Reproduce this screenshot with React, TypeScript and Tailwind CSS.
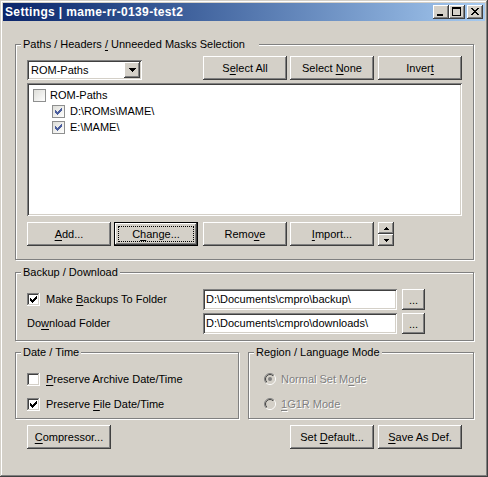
import React from "react";

const raised =
  "bg-[#d4d0c8] shadow-[inset_-1px_-1px_#404040,inset_1px_1px_#ffffff,inset_-2px_-2px_#808080,inset_2px_2px_#d4d0c8]";
const sunken =
  "shadow-[inset_1px_1px_#808080,inset_-1px_-1px_#ffffff,inset_2px_2px_#404040,inset_-2px_-2px_#d4d0c8]";

function Mn({ t, u }: { t: string; u?: number }) {
  if (u === undefined) return <>{t}</>;
  return (
    <>
      {t.slice(0, u)}
      <span className="underline decoration-1 underline-offset-[2px]">{t[u]}</span>
      {t.slice(u + 1)}
    </>
  );
}

// classic 7x7 tick, drawn as pixel columns
const tick = [2, 1, 0, 1, 2, 3, 4];
function Tick({ color, x = 3, y = 3 }: { color: string; x?: number; y?: number }) {
  return (
    <>
      {[2, 3, 4, 3, 2, 1, 0].map((s, c) => (
        <rect key={c} x={x + c} y={y + s} width={1} height={3} fill={color} />
      ))}
    </>
  );
}

function Btn({
  label,
  u,
  className = "",
}: {
  label: string;
  u?: number;
  className?: string;
}) {
  return (
    <div className={`w-[84px] h-[24px] shrink-0 flex items-center justify-center ${raised} ${className}`}>
      <span className="mt-[1px]">
        <Mn t={label} u={u} />
      </span>
    </div>
  );
}

function DefaultBtn({ label, u, className = "" }: { label: string; u?: number; className?: string }) {
  return (
    <div
      className={`w-[84px] h-[24px] shrink-0 p-[4px] bg-[#d4d0c8] shadow-[inset_0_0_0_1px_#000000,inset_-2px_-2px_#404040,inset_2px_2px_#ffffff,inset_-3px_-3px_#808080,inset_3px_3px_#d4d0c8] ${className}`}
    >
      <div className="w-full h-full border border-dotted border-black flex items-center justify-center">
        <span className="mt-[1px]">
          <Mn t={label} u={u} />
        </span>
      </div>
    </div>
  );
}

function Group({
  title,
  u,
  padR = "pr-[2px]",
  className = "",
  children,
}: {
  title: string;
  u?: number;
  padR?: string;
  className?: string;
  children: React.ReactNode;
}) {
  return (
    <div className={`border border-[#808080] shadow-[inset_1px_1px_#ffffff,1px_1px_#ffffff] ${className}`}>
      <div className={`-mt-[7px] ml-[5px] w-fit pl-[2px] ${padR} bg-[#d4d0c8] h-[13px] leading-[13px]`}>
        <Mn t={title} u={u} />
      </div>
      {children}
    </div>
  );
}

function Check({ checked }: { checked: boolean }) {
  return (
    <svg width="13" height="13" viewBox="0 0 13 13" shapeRendering="crispEdges" className="shrink-0">
      <rect x="0" y="0" width="12" height="1" fill="#808080" />
      <rect x="0" y="0" width="1" height="12" fill="#808080" />
      <rect x="1" y="1" width="10" height="1" fill="#404040" />
      <rect x="1" y="1" width="1" height="10" fill="#404040" />
      <rect x="0" y="12" width="13" height="1" fill="#ffffff" />
      <rect x="12" y="0" width="1" height="13" fill="#ffffff" />
      <rect x="1" y="11" width="11" height="1" fill="#d4d0c8" />
      <rect x="11" y="1" width="1" height="11" fill="#d4d0c8" />
      <rect x="2" y="2" width="9" height="9" fill="#ffffff" />
      {checked && <Tick color="#000000" />}
    </svg>
  );
}

function TreeCheck({ checked, id }: { checked: boolean; id: string }) {
  return (
    <svg width="13" height="13" viewBox="0 0 13 13" shapeRendering="crispEdges" className="shrink-0">
      <defs>
        <linearGradient id={id} x1="0" y1="0" x2="1" y2="1">
          <stop offset="0" stopColor="#dcdcd7" />
          <stop offset="1" stopColor="#ffffff" />
        </linearGradient>
      </defs>
      <rect x="0.5" y="0.5" width="12" height="12" fill={`url(#${id})`} stroke="#8e8f8f" />
      {checked && <Tick color="#4b5e9e" />}
    </svg>
  );
}

function Radio({ checked, id }: { checked: boolean; id: string }) {
  return (
    <svg width="12" height="12" viewBox="0 0 12 12" className="shrink-0">
      <defs>
        <linearGradient id={`${id}a`} x1="0" y1="0" x2="1" y2="1">
          <stop offset="0.5" stopColor="#808080" />
          <stop offset="0.5" stopColor="#ffffff" />
        </linearGradient>
        <linearGradient id={`${id}b`} x1="0" y1="0" x2="1" y2="1">
          <stop offset="0.5" stopColor="#404040" />
          <stop offset="0.5" stopColor="#d4d0c8" />
        </linearGradient>
      </defs>
      <circle cx="6" cy="6" r="5.5" fill="none" stroke={`url(#${id}a)`} />
      <circle cx="6" cy="6" r="4.5" fill="#d4d0c8" stroke={`url(#${id}b)`} />
      {checked && <circle cx="6" cy="6" r="2" fill="#808080" />}
    </svg>
  );
}

function TitleBtn({ kind }: { kind: "min" | "max" | "close" }) {
  return (
    <div className={`w-[16px] h-[14px] ${raised}`}>
      <svg width="16" height="14" viewBox="0 0 16 14" shapeRendering="crispEdges">
        {kind === "min" && <rect x="4" y="9" width="6" height="2" fill="#000" />}
        {kind === "max" && (
          <>
            <rect x="3" y="2" width="9" height="2" fill="#000" />
            <rect x="3" y="2" width="1" height="9" fill="#000" />
            <rect x="11" y="2" width="1" height="9" fill="#000" />
            <rect x="3" y="10" width="9" height="1" fill="#000" />
          </>
        )}
        {kind === "close" &&
          [0, 1, 2, 3, 4, 5, 6].map((i) => (
            <React.Fragment key={i}>
              <rect x={4 + i} y={3 + i} width="2" height="1" fill="#000" />
              <rect x={10 - i} y={3 + i} width="2" height="1" fill="#000" />
            </React.Fragment>
          ))}
      </svg>
    </div>
  );
}

function Field({ value }: { value: string }) {
  return (
    <div className={`w-[194px] h-[21px] bg-white ${sunken} flex items-center pl-[3px]`}>{value}</div>
  );
}

function DotsBtn() {
  return (
    <div className={`w-[23px] h-[21px] ml-[5px] flex items-center justify-center ${raised}`}>
      <span className="mt-[1px]">...</span>
    </div>
  );
}

export default function App() {
  return (
    <div
      className={`w-[488px] h-[477px] p-[3px] bg-[#d4d0c8] text-black text-[11px] leading-[13px] [font-family:'Liberation_Sans',Arial,sans-serif] shadow-[inset_-1px_-1px_#404040,inset_1px_1px_#d4d0c8,inset_-2px_-2px_#808080,inset_2px_2px_#ffffff]`}
    >
      {/* title bar */}
      <div className="h-[18px] flex items-center bg-gradient-to-r from-[#0a246a] to-[#a6caf0] pl-[2px] pr-[2px]">
        <span className="text-white font-bold text-[12px] tracking-[0.35px] leading-[14px]">
          Settings | mame-rr-0139-test2
        </span>
        <div className="ml-auto flex items-center">
          <TitleBtn kind="min" />
          <TitleBtn kind="max" />
          <div className="w-[2px]" />
          <TitleBtn kind="close" />
        </div>
      </div>

      {/* client area */}
      <div className="pl-[12px]">
        <Group title="Paths / Headers / Unneeded Masks Selection" u={16} padR="pr-[14px]" className="mt-[23px] w-[459px] pb-[13px]">
          <div className="mt-[5px] pl-[11px] flex items-start h-[24px]">
            <div className={`mt-[4px] w-[115px] h-[20px] bg-white ${sunken} flex items-center justify-between pl-[4px] pr-[2px]`}>
              <span>ROM-Paths</span>
              <div className={`w-[16px] h-[16px] flex items-center justify-center ${raised}`}>
                <svg width="7" height="4" viewBox="0 0 7 4" shapeRendering="crispEdges">
                  <rect x="0" y="0" width="7" height="1" fill="#000" />
                  <rect x="1" y="1" width="5" height="1" fill="#000" />
                  <rect x="2" y="2" width="3" height="1" fill="#000" />
                  <rect x="3" y="3" width="1" height="1" fill="#000" />
                </svg>
              </div>
            </div>
            <Btn label="Select All" u={1} className="ml-[61px]" />
            <Btn label="Select None" u={7} className="ml-[3px]" />
            <Btn label="Invert" u={5} className="ml-[4px]" />
          </div>

          <div className={`mt-[3px] ml-[11px] w-[435px] h-[133px] bg-white ${sunken} pt-[4px] pl-[6px]`}>
            <div className="h-[16px] flex items-center gap-[4px]">
              <TreeCheck checked={false} id="tc0" />
              <span>ROM-Paths</span>
            </div>
            <div className="h-[16px] flex items-center gap-[5px] pl-[19px]">
              <TreeCheck checked id="tc1" />
              <span>D:\ROMs\MAME\</span>
            </div>
            <div className="h-[16px] flex items-center gap-[5px] pl-[19px]">
              <TreeCheck checked id="tc2" />
              <span>E:\MAME\</span>
            </div>
          </div>

          <div className="mt-[6px] pl-[11px] flex items-start h-[24px]">
            <Btn label="Add..." u={0} />
            <DefaultBtn label="Change..." u={1} className="ml-[3px]" />
            <Btn label="Remove" u={4} className="ml-[5px]" />
            <Btn label="Import..." u={0} className="ml-[3px]" />
            <div className="ml-[4px] w-[16px] h-[24px] flex flex-col">
              <div className={`h-[12px] flex items-center justify-center ${raised}`}>
                <svg width="5" height="3" viewBox="0 0 5 3" shapeRendering="crispEdges">
                  <rect x="2" y="0" width="1" height="1" fill="#000" />
                  <rect x="1" y="1" width="3" height="1" fill="#000" />
                  <rect x="0" y="2" width="5" height="1" fill="#000" />
                </svg>
              </div>
              <div className={`h-[12px] flex items-center justify-center ${raised}`}>
                <svg width="5" height="3" viewBox="0 0 5 3" shapeRendering="crispEdges">
                  <rect x="0" y="0" width="5" height="1" fill="#000" />
                  <rect x="1" y="1" width="3" height="1" fill="#000" />
                  <rect x="2" y="2" width="1" height="1" fill="#000" />
                </svg>
              </div>
            </div>
          </div>
        </Group>

        <Group title="Backup / Download" className="mt-[12px] w-[459px] pb-[6px]">
          <div className="mt-[10px] pl-[11px] flex items-center h-[21px]">
            <div className="w-[176px] flex items-center gap-[6px]">
              <Check checked />
              <span>
                <Mn t="Make Backups To Folder" u={5} />
              </span>
            </div>
            <Field value="D:\Documents\cmpro\backup\" />
            <DotsBtn />
          </div>
          <div className="mt-[3px] pl-[11px] flex items-center h-[21px]">
            <div className="w-[176px]">
              <Mn t="Download Folder" u={2} />
            </div>
            <Field value="D:\Documents\cmpro\downloads\" />
            <DotsBtn />
          </div>
        </Group>

        <div className="mt-[11px] flex items-start">
          <Group title="Date / Time" className="w-[224px] pb-[6px]">
            <div className="mt-[12px] h-[16px] pl-[11px] flex items-center gap-[6px]">
              <Check checked={false} />
              <span>
                <Mn t="Preserve Archive Date/Time" u={0} />
              </span>
            </div>
            <div className="mt-[9px] h-[16px] pl-[11px] flex items-center gap-[6px]">
              <Check checked />
              <span>
                <Mn t="Preserve File Date/Time" u={9} />
              </span>
            </div>
          </Group>
          <Group title="Region / Language Mode" className="ml-[9px] w-[226px] pb-[6px]">
            <div className="mt-[12px] h-[16px] pl-[15px] flex items-center gap-[5px] text-[#808080] [text-shadow:1px_1px_0_#ffffff]">
              <Radio checked id="r0" />
              <span>
                <Mn t="Normal Set Mode" u={12} />
              </span>
            </div>
            <div className="mt-[9px] h-[16px] pl-[15px] flex items-center gap-[5px] text-[#808080] [text-shadow:1px_1px_0_#ffffff]">
              <Radio checked={false} id="r1" />
              <span>
                <Mn t="1G1R Mode" u={0} />
              </span>
            </div>
          </Group>
        </div>

        <div className="mt-[6px] pl-[12px] flex items-start">
          <Btn label="Compressor..." u={0} />
          <Btn label="Set Default..." u={4} className="ml-[179px]" />
          <Btn label="Save As Def." u={0} className="ml-[4px]" />
        </div>
      </div>
    </div>
  );
}
